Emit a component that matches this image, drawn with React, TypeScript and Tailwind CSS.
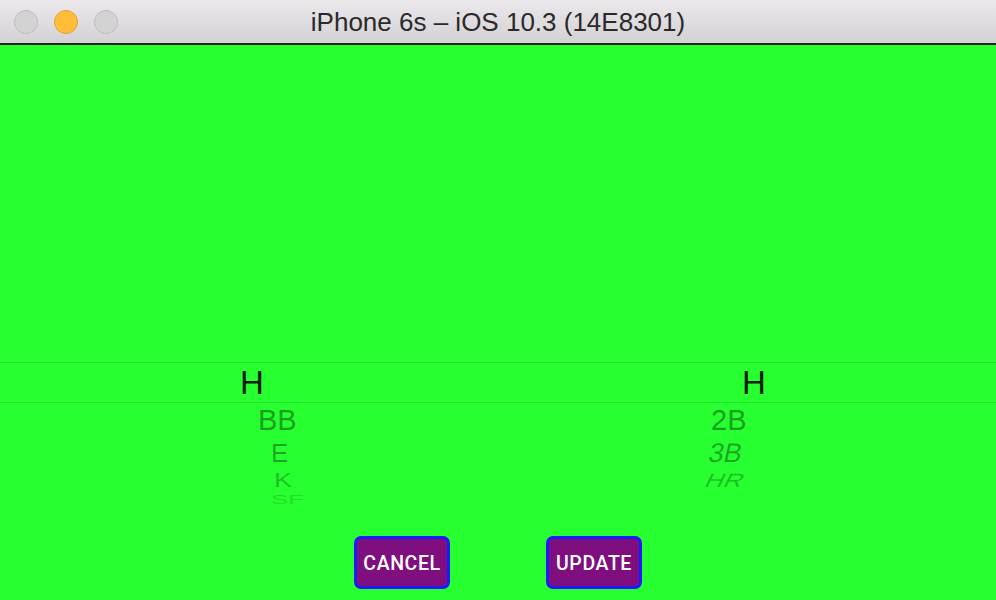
import React from "react";

export default function App() {
  const sans = { fontFamily: '"Liberation Sans", Arial, sans-serif' };
  return (
    <div className="w-[996px] h-[600px] flex flex-col overflow-hidden bg-[#27ff30]" style={sans}>
      {/* Title bar */}
      <div className="relative h-[45px] shrink-0 flex items-center justify-center bg-gradient-to-b from-[#ebe9eb] to-[#d3d1d3] border-b-2 border-[#222]">
        <div className="absolute left-[14px] top-[10px] flex gap-[16px]">
          <div className="w-[24px] h-[24px] rounded-full bg-[#d3d3d3] border border-[#bdbdbd]" />
          <div className="w-[24px] h-[24px] rounded-full bg-[#ffbd3a] border border-[#e2a235]" />
          <div className="w-[24px] h-[24px] rounded-full bg-[#d3d3d3] border border-[#bdbdbd]" />
        </div>
        <div className="text-[26px] leading-none text-[#2a2a2a] pt-[1px]">iPhone 6s – iOS 10.3 (14E8301)</div>
      </div>

      {/* Green content */}
      <div className="flex-1 flex flex-col">
        <div className="h-[317px] shrink-0" />
        {/* Selected row */}
        <div className="h-[41px] shrink-0 flex border-y border-[#22e32a] text-[#061a06]">
          <div className="w-[498px] pl-[240px] text-[33px] leading-[40px]">H</div>
          <div className="pl-[244px] text-[33px] leading-[40px]">H</div>
        </div>
        {/* BB / 2B */}
        <div className="h-[35px] shrink-0 flex text-black/40">
          <div className="w-[498px] pl-[258px] text-[29px] leading-[35px]">BB</div>
          <div className="pl-[213px] text-[29px] leading-[35px]">2B</div>
        </div>
        {/* E / 3B */}
        <div className="h-[31px] shrink-0 flex text-black/35">
          <div className="w-[498px] pl-[271px] text-[26px] leading-[31px]">E</div>
          <div className="pl-[211px] text-[27px] leading-[31px]">
            <span className="inline-block -skew-x-12">3B</span>
          </div>
        </div>
        {/* K / HR */}
        <div className="h-[23px] shrink-0 flex text-black/25">
          <div className="w-[498px] pl-[274px] text-[27px] leading-[23px]">
            <span className="inline-block scale-y-[0.72]">K</span>
          </div>
          <div className="pl-[208px] text-[26px] leading-[23px]">
            <span className="inline-block scale-y-[0.74] -skew-x-[20deg]">HR</span>
          </div>
        </div>
        {/* SF */}
        <div className="h-[15px] shrink-0 flex text-black/15">
          <div className="w-[498px] pl-[271px] text-[26px] leading-[15px]">
            <span className="inline-block scale-y-[0.5]">SF</span>
          </div>
        </div>
        <div className="h-[29px] shrink-0" />
        {/* Buttons */}
        <div className="flex justify-center gap-[96px]" style={{ fontFamily: 'Roboto, "Liberation Sans", sans-serif' }}>
          <button className="w-[96px] h-[53px] pt-[3px] rounded-[7px] border-[3px] border-[#1a1aff] bg-[#7f0f7f] text-white text-[19.5px] font-medium tracking-[0.6px]">
            CANCEL
          </button>
          <button className="w-[96px] h-[53px] pt-[3px] rounded-[7px] border-[3px] border-[#1a1aff] bg-[#7f0f7f] text-white text-[19.5px] font-medium tracking-[0.6px]">
            UPDATE
          </button>
        </div>
      </div>
    </div>
  );
}
